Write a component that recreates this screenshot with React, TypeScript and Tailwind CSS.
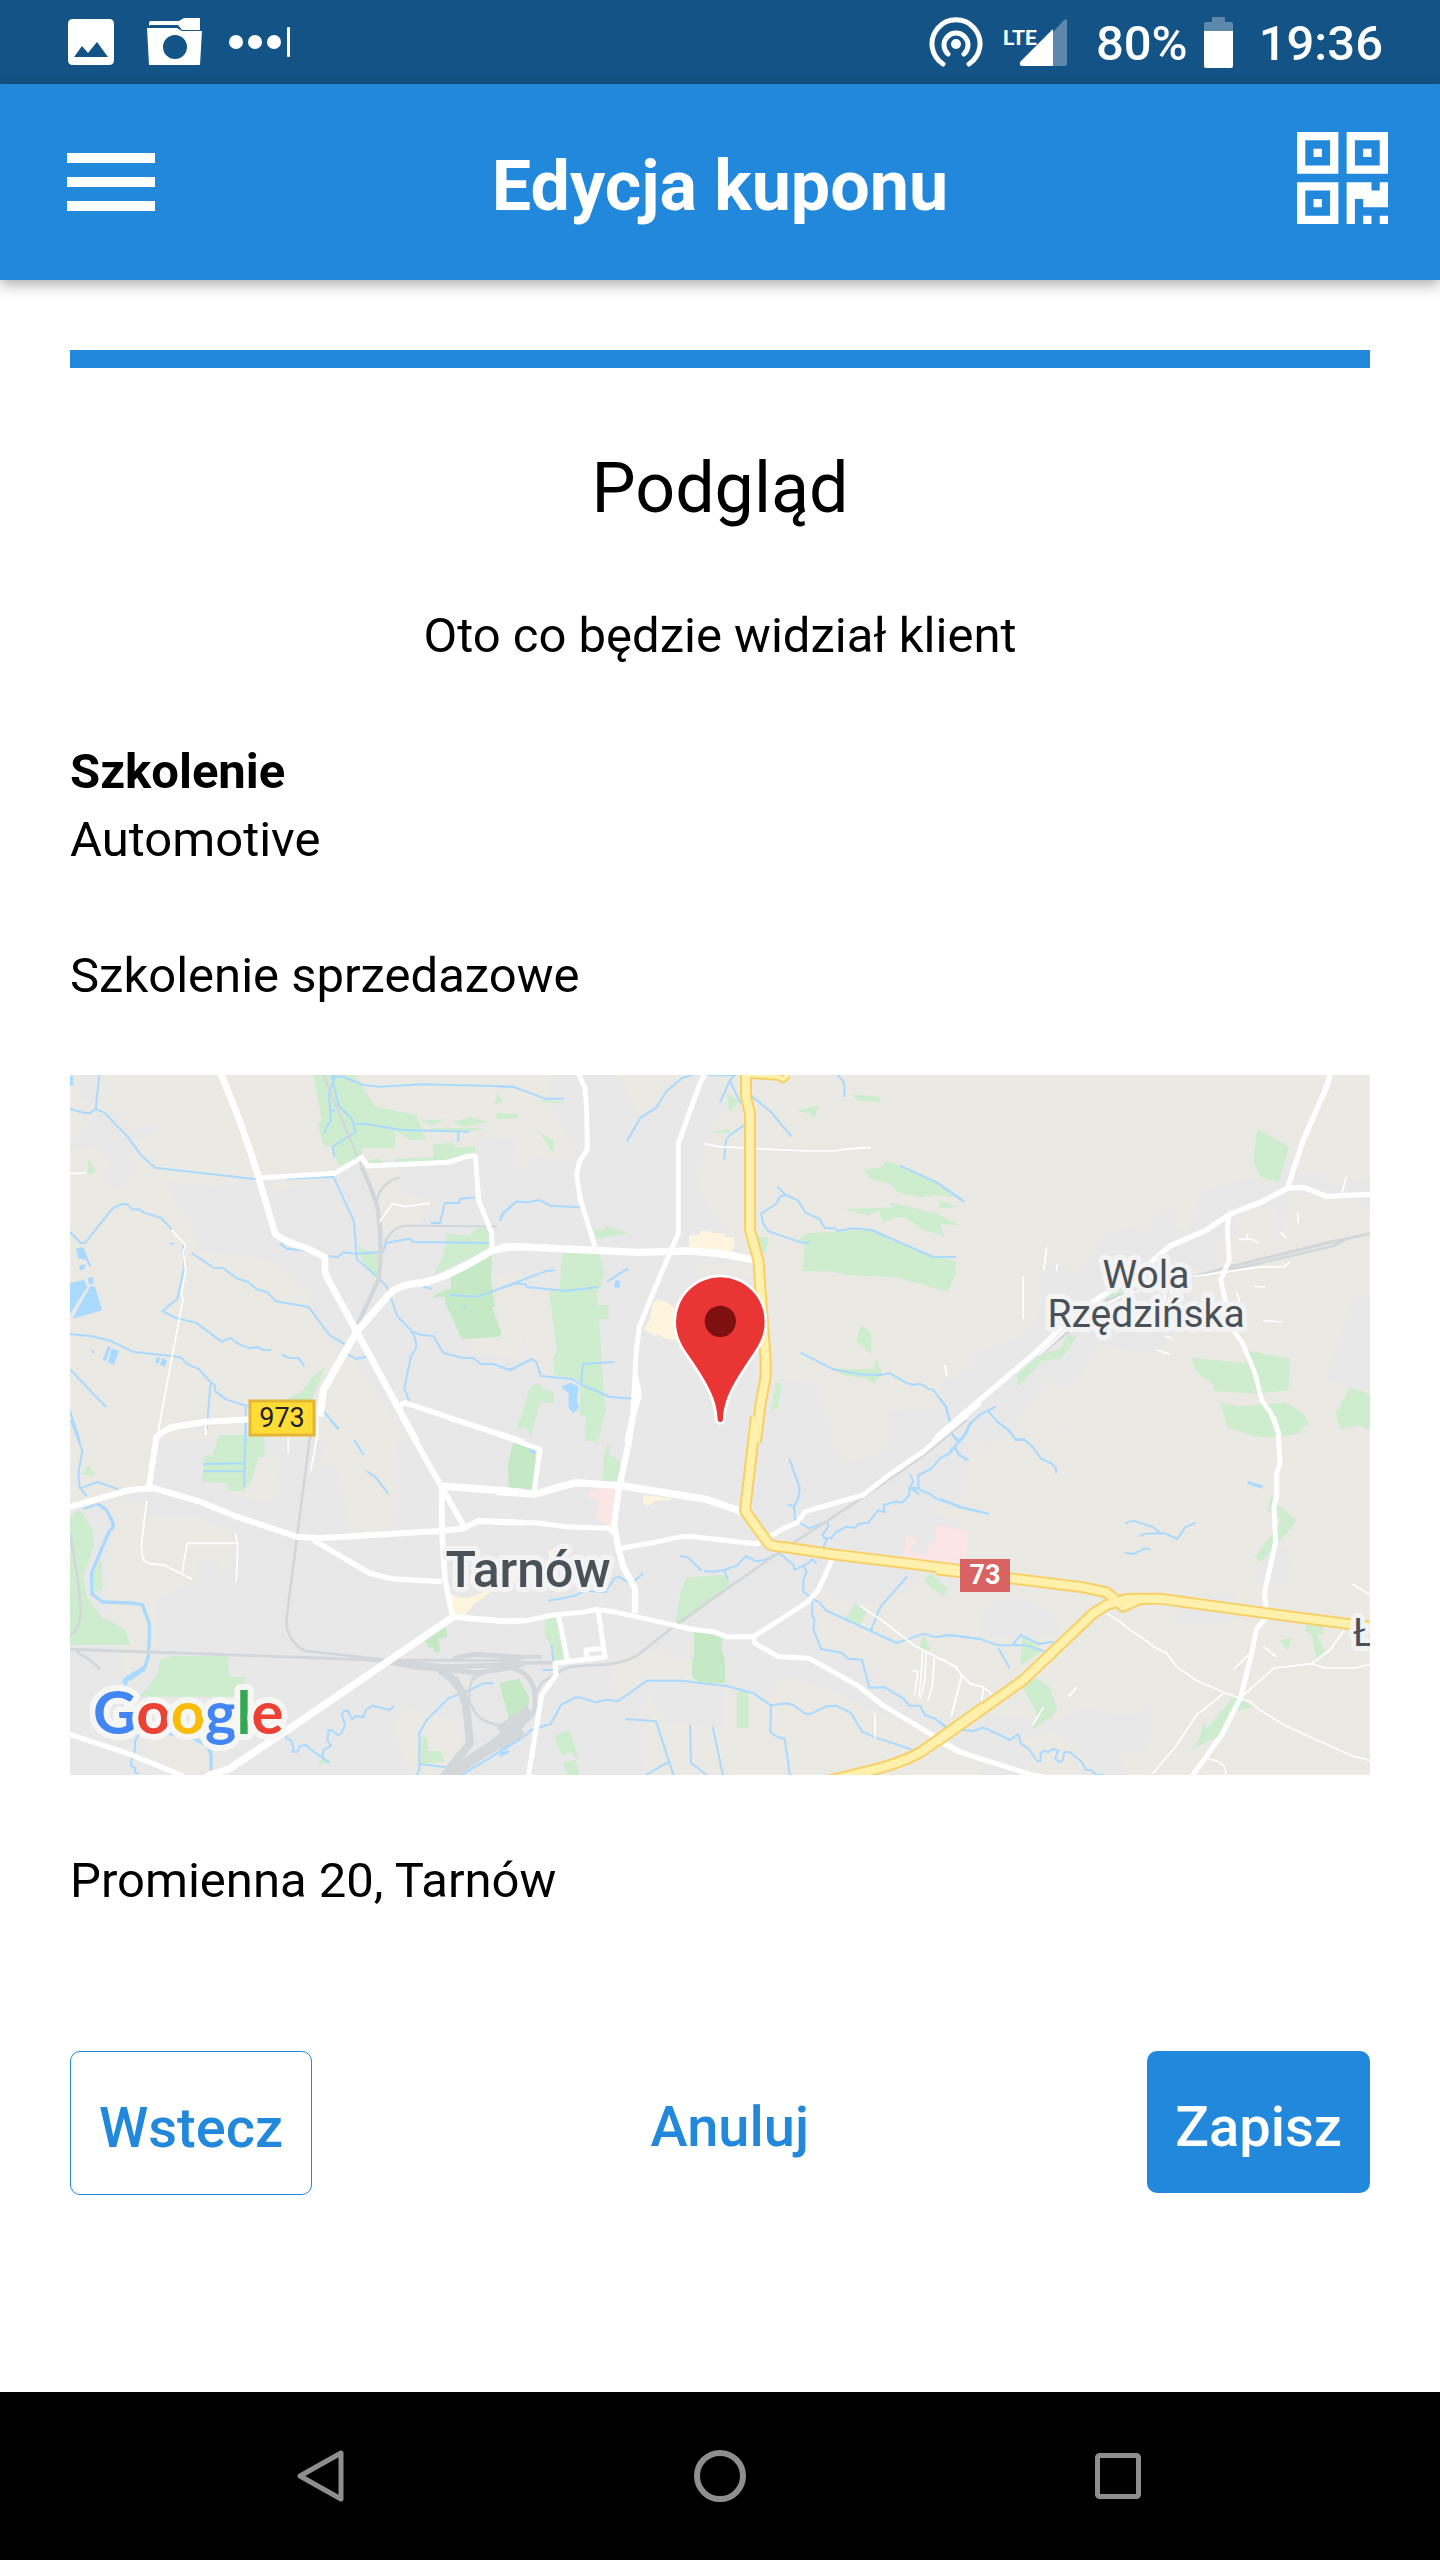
import React from "react";

type Shape = { d: string; w?: number };

type Tile = {
  x: number;
  y: number;
  urban: string[];
  land: string[];
  green: string[];
  darkGreen: string[];
  commercial: string[];
  medical: string[];
  lake: string[];
  stream: Shape[];
  rail: Shape[];
  road: Shape[];
  highway: Shape[];
};

// Map tiles: each one is drawn in units of a third of a pixel from its own origin.
const tiles: Tile[] = [
  {
    x: -30,
    y: -15,
    urban: [
      "M380 362L520 380L650 355L880 345L960 300L1300 290V235H1450V1140H1100L1000 1000L960 1000L940 900L880 850L810 740L800 690L690 600L480 570L440 480L400 410Z",
      "M120 45H178L166 140L120 110Z",
      "M90 270L160 160L250 150L270 210L355 190L345 215L270 250L290 330L250 385H210L190 340L215 310L170 260Z",
    ],
    land: [
      "M690 370L860 350L700 398Z",
      "M970 320L1085 330L1080 400L1180 420L1140 490L1030 520Z",
      "M1360 650L1450 630V900L1380 890L1300 880L1280 830L1385 820Z",
      "M835 1060L930 870L1000 990L1110 1140H820Z",
    ],
    green: [
      "M820 45H942L1008 140L1128 165L1158 240H1110L1065 210V263H967L965 290L897 318L877 258H852L833 195L845 180Z",
      "M1363 135L1375 95L1386 122Z",
      "M1372 158L1433 163V175L1368 178Z",
      "M1140 182L1218 178L1175 195Z",
      "M1235 187L1290 172L1343 185L1275 202Z",
      "M1168 203L1340 205L1290 214L1180 212Z",
      "M1177 254L1240 247L1245 263L1305 259V275L1215 303L1060 308L1070 297L1175 291L1183 288Z",
      "M985 300L1018 295L1035 310H990Z",
      "M145 295L168 335L145 343Z",
      "M953 558L1015 585L1010 650L1000 650L965 600Z",
      "M1219 520L1285 527L1310 503H1345L1360 560L1180 647L1212 583Z",
      "M735 1020L785 995L820 948L857 920L815 1020Z",
      "M540 1125H628V1145H530Z",
    ],
    darkGreen: ["M1233 650L1355 585L1354 672L1366 740H1355L1385 820L1380 830L1266 838L1216 730V712L1182 713V704L1233 684Z"],
    commercial: [],
    medical: [],
    lake: [
      "M90 47H99V75L90 78Z",
      "M108 565L130 562L153 618L148 620L138 600L115 595Z",
      "M117 617L137 612L133 628L120 632Z",
      "M90 670L132 659L142 680L90 763Z",
      "M142 656L158 650L162 668L150 676Z",
      "M150 680L164 677L187 751L97 776Z",
      "M204 858L213 860L198 903L188 899Z",
      "M215 865L237 873L222 914L204 907Z",
      "M350 892L360 895L355 912L346 909Z",
      "M366 895L381 900L375 920L360 914Z",
      "M386 548L406 549L396 556Z",
      "M153 869L166 875L160 882Z",
      "M1265 738H1282L1275 745Z",
    ],
    stream: [
      { d: "M178 45L167 147L150 159H135L90 147M167 147L192 157L262 229L306 289L346 323L650 358M740 356L880 350L942 484L950 597" },
      { d: "M875 48L910 51L970 75L1020 80L1150 73L1418 80L1440 88" },
      { d: "M875 48L883 85L897 138L936 176L946 216L878 260L883 292M867 95L872 185L860 200L852 222M945 191L980 192L1085 210L1288 215M1255 215V245M885 50L867 95M870 148L886 155" },
      { d: "M90 516L122 549H135L218 445L245 432L262 433L278 449L297 448L313 458L364 474L395 508" },
      { d: "M430 555L433 620L412 717L367 753L405 773L468 788L545 845L571 834L598 853L628 865L650 861L670 870H694" },
      { d: "M455 579L523 624H549L588 654L624 666L650 688L682 697L708 724L806 741L868 825L915 853M920 880L947 897L980 890" },
      { d: "M725 883L745 893L777 895L793 919" },
      { d: "M90 822L155 829L210 842L278 875L420 891L445 914L477 927L512 967L524 975V992L558 1018L628 1040" },
      { d: "M90 928L198 1041M90 1054L120 1145M512 967L500 1110M617 1040V1145" },
      { d: "M720 550L740 566L800 572M865 588L893 592L910 577L950 581L1030 575L1037 549L1107 536L1122 546L1350 549" },
      { d: "M950 597L1005 644L1040 680L1072 768L1116 815L1145 825L1180 828L1210 879L1270 894H1300L1323 912H1358L1412 930L1440 915M1116 815Q1132 845 1128 865L1113 889L1093 985L1108 1025" },
      { d: "M1172 489H1200L1214 429H1257L1260 417L1305 412M1382 482L1388 462L1428 425H1440M1230 705L1312 710L1420 672L1440 664" },
      { d: "M850 1052L896 1107M1150 680L1176 686" },
    ],
    rail: [
      { d: "M850 45L965 320", w: 7 },
      { d: "M965 320Q1000 400 1012 440Q1030 560 1015 660L950 800", w: 13 },
      { d: "M950 800L855 990L810 1140", w: 6 },
      { d: "M1012 420Q1020 370 1078 352M1035 545Q1060 500 1095 497L1370 499", w: 7 },
    ],
    road: [
      { d: "M542 40Q610 200 655 350L705 520Q720 540 800 565L855 592V635L860 650L950 815L1130 1145", w: 20 },
      { d: "M655 354L885 340L965 292L983 318L1225 307L1280 289H1306L1316 420L1355 520V575", w: 15 },
      { d: "M840 1070L850 990L950 815L1050 700Q1080 673 1150 668Q1230 650 1355 572L1400 562L1450 560", w: 22 },
      { d: "M345 1140Q350 1105 500 1085L630 1078M1075 1040L1095 1028L1450 1147", w: 16 },
      { d: "M90 340H138M395 510L437 555L430 575L437 632L424 705L429 717L355 1110M1018 486L1058 431L1095 440L1170 429M497 1085V1125M832 1060V1140", w: 5 },
    ],
    highway: [],
  },
  {
    x: 430,
    y: -15,
    urban: [
      "M0 200L150 150V45H640L690 130L640 190L600 330V400L660 490L700 530L760 640L820 960L960 970L970 1060L1290 1050L1450 1000V1145H0Z",
    ],
    land: [
      "M0 150L150 140L215 250L210 300L90 290V320L50 320V235H0Z",
      "M350 45H560L500 110L420 170Z",
      "M595 620L760 600V650L595 650Z",
      "M0 700L80 680L150 700L165 880L150 940L110 935L60 800L0 740Z",
    ],
    green: [
      "M120 217L162 243L158 282Z",
      "M280 508L315 510V495L384 520L290 537Z",
      "M0 162L52 164V173L0 177Z",
      "M680 97L718 125L688 160Z",
      "M628 216L688 207V219Z",
      "M890 154L956 135L944 175L928 160Z",
      "M1057 103L1140 110V127L1075 123Z",
      "M187 580H297L315 640L305 660V675L290 695L294 735H325V778H297L312 1000L318 1050L295 1140H255L258 1070L238 1065L242 965L215 955L163 945L160 885L172 880L148 695L178 690Z",
      "M52 1110L85 1000L90 980L118 968L125 985L162 997L160 1030L120 1025L92 1132L80 1102Z",
      "M770 530L805 534L797 580L780 570Z",
      "M898 540L920 520L1110 510L1300 592L1366 603V640L1342 695L1190 652L1050 646L990 635L906 632L916 562Z",
      "M1089 328L1142 323L1162 301L1200 318L1310 370L1365 410L1300 405L1265 412L1198 400L1165 370L1115 358Z",
      "M1030 448L1180 442L1170 427L1315 462L1383 497L1317 491L1333 527L1273 512L1218 473L1182 470L1150 490L1135 450L1105 466Z",
      "M1315 443L1325 423L1372 441Z",
      "M1084 794L1115 820L1112 882L1068 843Z",
      "M990 925L1120 928L1130 898L1146 940L1122 970L1095 955L1040 948Z",
      "M828 968H846L833 1045L813 1050Z",
      "M125 120L190 125V130L125 125Z",
    ],
    darkGreen: [],
    commercial: [
      "M567 528L600 522V512H625L640 520H675V532H702L704 560L695 577L640 585L567 565Z",
      "M458 730L470 720L500 725L522 745L530 843L490 835L480 822L466 828L432 808L450 780Z",
    ],
    medical: [],
    lake: ["M183 980L212 968L236 980L230 1020L237 1043L220 1060L206 1043V1000Z", "M346 660L362 664L357 684L342 682Z"],
    stream: [
      { d: "M0 80H40L135 116H192M580 45L546 54L498 95L470 142L422 172L381 244" },
      { d: "M625 46H705L690 60L660 128M688 60L722 130M755 108L810 153L874 229M732 196L690 225L678 240L673 298" },
      { d: "M1010 45Q1033 60 1033 75V112" },
      { d: "M0 482L8 460L48 425L85 427L118 420L150 437L240 442" },
      { d: "M0 686L135 634L164 631M40 670L77 673L80 681L198 693L294 681M322 664L385 625" },
      { d: "M0 922L32 930L95 897L110 908L122 948L215 957L240 972L330 1011L400 1016M341 906L249 912L243 972" },
      { d: "M832 380L858 405L895 422L917 458L958 477L976 505H1004L1012 513L1062 505L1115 510L1300 591H1368M855 405L840 410L828 432L784 460L790 492L806 514L905 548H928" },
      { d: "M1200 317L1310 367L1392 425M902 878L1000 928L1080 943L1140 945L1170 940L1218 968L1240 975L1260 971L1285 986L1300 990L1338 1041L1352 1100" },
    ],
    rail: [],
    road: [
      { d: "M235 40L255 85L260 150L262 268L238 305L230 345L240 415L285 560", w: 15 },
      { d: "M615 40L600 70L535 250V520L505 590L450 720L418 800L408 880L405 950L398 1070L380 1145M408 950L418 1005L400 1070", w: 15 },
      { d: "M0 562L50 560L415 577L560 573Q660 576 760 600", w: 22 },
      { d: "M0 1125L70 1147M1300 1145L1440 1028", w: 16 },
      { d: "M612 250L655 260L920 273H1005L1030 268L1113 262M1335 915L1340 948", w: 5 },
    ],
    highway: [
      { d: "M750 45L835 50L848 58L865 45", w: 12 },
      { d: "M738 40V110L750 160V510L775 600L797 900V950L782 1030L768 1145", w: 24 },
    ],
  },
  {
    x: 870,
    y: -15,
    urban: [
      "M0 970L95 920V880L240 835L295 770L300 640L350 600L415 640L490 525L580 500L610 530L630 480L705 430V500L740 520L785 395L920 355L1000 370L1050 280L1060 345L1155 340V375L1300 355V450L1210 410L1050 400L1030 500L1000 570L1010 440L950 440L880 480L910 520L830 550L820 620L650 640L750 660L760 730L910 720L900 810L720 800L640 885L480 850L430 940L360 1000L380 1110L250 1060L210 1140H0Z",
      "M1245 700L1300 720V1000L1155 955Z",
    ],
    land: ["M250 1060L330 960L400 1000L360 1100Z"],
    green: [
      "M952 205L1047 262L1017 367L960 350L940 303Z",
      "M0 592L47 604V640L23 695L0 686Z",
      "M0 385L45 410L0 405ZM0 423L50 440L0 444ZM0 468L62 496L0 491ZM0 495L12 530L0 518Z",
      "M300 882L365 865L383 820L410 830L365 895L305 903L236 980L231 945Z",
      "M755 893L915 910L925 872L1050 897L1046 990L950 1002L822 993L820 972L766 934Z",
      "M842 1028L895 1040L1035 1027L1093 1063L1104 1090L1075 1118L1020 1130L960 1132L863 1103Z",
      "M1230 983L1295 1003V1100L1280 1107L1257 1094L1200 1108L1187 1060Z",
      "M497 712L545 682L585 680L590 690L500 722Z",
    ],
    darkGreen: [],
    commercial: [],
    medical: [],
    lake: [],
    stream: [{ d: "M0 374L73 425M0 591H48M0 1015L18 1040L32 1090V1120L60 1145L78 1122L90 1092L122 1062L167 1040M143 1052L174 1087L206 1110L228 1138H255" }],
    rail: [
      { d: "M300 885L500 720L600 688L760 650L860 622L1290 520", w: 8 },
      { d: "M865 622L1160 548L1225 535L1180 558L870 630Z", w: 8 },
    ],
    road: [
      { d: "M1172 40L1160 80L1090 240L1042 385L962 427L870 462L800 510L690 558L600 635L420 750L290 875L-10 1130M1042 384L1090 382L1158 409L1295 403", w: 16 },
      { d: "M868 462L862 505L868 600L842 660L858 730L880 810L908 850L945 940L965 1020L993 1060L1015 1115V1145", w: 14 },
      { d: "M320 560L312 630M352 612L350 632M249 650V777M297 886L400 790L540 710L690 660L840 638L970 620L1033 621L1050 604M895 538H938L956 550M922 523V538M1020 517L1040 533M1073 458L1075 490M942 679L977 681M970 782L1028 786M890 697L912 770M650 870L690 883M673 828L692 833M1205 403L1219 350M750 660V697M15 915L20 947M670 680L676 720M690 680L697 712", w: 5 },
    ],
    highway: [],
  },
  {
    x: -30,
    y: 345,
    urban: ["M90 60H1450V1080H90Z"],
    land: [
      "M90 60H345L330 200L90 250Z",
      "M170 250L310 245L330 290L480 290L560 330L590 370L540 480V420H475V480L350 540V690H330V740L250 830V690L200 500L220 310Z",
      "M490 190L600 210L650 110L720 110L700 245L640 240L560 210Z",
      "M860 60H1070L1060 330L930 330L900 170L870 130L830 160Z",
      "M380 920L520 950L540 1060H430L340 1010L300 940Z",
      "M1090 860L1250 900L1270 980L1190 1062H1100L1060 910Z",
    ],
    green: [
      "M128 164L145 133L167 167Z",
      "M538 45H672L674 110L655 112L635 180L611 214H563L561 190L486 186L492 108L518 105Z",
      "M90 290L118 270L158 327L162 380L130 465L140 530L185 590L256 630L270 675H90Z",
      "M184 415L187 508L163 517L155 470Z",
      "M362 718L400 708H564L566 770L618 770L605 830L600 830H300L352 765Z",
      "M1142 948L1163 952V993L1203 994L1213 1025L1143 1033Z",
      "M832 1032L850 1010L873 1030Z",
    ],
    darkGreen: [
      "M1150 655L1217 615L1222 650L1197 657L1200 697L1181 696V682L1167 684Z",
      "M1378 790L1440 775V905L1410 907Z",
      "M1404 130L1420 70H1450V208L1406 207Z",
    ],
    commercial: ["M1232 522L1250 530L1285 535L1340 512L1440 450V480L1355 515L1300 555L1275 585L1240 580Z"],
    medical: [],
    lake: ["M250 775L315 735L318 750L275 780L245 790Z"],
    stream: [
      { d: "M92 0L127 92L115 160L119 202L140 228M119 205L173 186L235 208M870 0L896 27M942 60L972 105M978 153L1005 170L1046 222" },
      { d: "M170 250L200 270L219 308V322L207 335L154 460L156 522L187 546L270 549L307 554L328 610V650L325 710L315 740L260 775L245 840L260 900L300 930L400 942L460 955L500 975L513 1000V1050", w: 10 },
      { d: "M166 255L130 267M490 132L612 130M490 154H612M617 0L612 200M297 940L285 965V988L276 1015L272 1038L285 1042V1056L296 1063" },
      { d: "M738 938V953L756 964V973L761 982L758 995H772L780 978L798 975L818 993L868 1027M848 1010L850 990L873 977L862 960L866 930H875L894 945L905 938L915 915L905 883L912 873L924 872L935 898L948 888L970 892L978 870L998 857L1048 870L1063 857" },
      { d: "M1138 940L1160 900L1225 835L1290 810L1330 790H1360M1138 933V1050L1128 1068M1138 1032L1218 1042M1262 1067L1440 958" },
    ],
    rail: [
      { d: "M90 688L650 707L1000 720L1440 722", w: 9 },
      { d: "M90 340Q120 500 122 580Q120 620 90 650M110 695L150 720L180 747", w: 8 },
      { d: "M810 50L740 590V625Q760 680 797 693L1000 715", w: 8 },
      { d: "M1000 718L1120 740L1310 758L1440 740M1060 722L1210 740L1450 733M1240 716L1300 703L1450 712", w: 15 },
      { d: "M1200 750Q1270 790 1280 870L1290 970L1210 1070", w: 24 },
      { d: "M1210 1070L1340 985L1450 905M1230 1070L1330 1000L1450 935", w: 26 },
      { d: "M1250 770Q1290 850 1310 885Q1350 920 1400 915M1310 755Q1280 800 1290 840M1300 780Q1350 735 1420 745", w: 7 },
    ],
    road: [
      { d: "M85 262L270 210L340 204L480 245L590 290L770 350L835 355L1210 332L1270 325L1315 303L1450 308", w: 18 },
      { d: "M325 215L350 50L390 22L500 5L630 -2", w: 18 },
      { d: "M820 360L990 460L1060 477L1205 485", w: 16 },
      { d: "M1085 -10L1210 210L1272 320M1205 195L1206 340L1215 480L1238 590L1290 595L1400 604L1450 602", w: 17 },
      { d: "M1205 198L1450 217M1240 590L750 925L570 1045L500 1070", w: 22 },
      { d: "M85 942L270 1003L430 1068M1225 -7L1450 65", w: 16 },
      { d: "M320 243L304 375L308 417L325 430L374 436L455 477M425 463L442 370H593M586 340L593 370L589 485M745 50V99M833 0V40L812 153M360 0L355 40M497 0V46", w: 5 },
    ],
    highway: [],
  },
  {
    x: 430,
    y: 345,
    urban: ["M0 15H1430L1380 300L1400 440L1440 560V1070H0Z"],
    land: [
      "M330 740L480 680L500 710L580 715V790L440 782L350 840Z",
      "M440 782L480 905L670 920V790L720 800L760 820L800 850L850 770L1000 810L1090 860L1330 960L1380 1000L1440 1020V1070H430Z",
      "M940 500L1060 560L1210 520L1280 460L1440 530V880L1340 930L1200 820L1080 720L960 680Z",
      "M980 -80H1170L1160 95L1040 130L1000 90Z",
      "M1280 275L1440 200V320Z",
      "M1410 60H1450V300L1390 260Z",
    ],
    green: [
      "M52 0H100L92 55L80 22L55 28ZM258 0H310L292 65L253 63Z",
      "M322 72L333 74L326 105L360 120L362 180L340 190L307 184L312 108Z",
      "M558 473L672 464L695 497L548 610H525L542 515Z",
      "M135 595L170 590L195 715L163 725V690L133 645Z",
      "M710 812L745 816V926L710 923Z",
      "M162 945L208 930L236 1017L213 998L185 1005Z",
      "M190 1030L225 1020L240 1067H202Z",
      "M1066 550L1100 572L1080 617L1035 595Z",
      "M1274 477L1293 460L1340 505L1332 528L1292 503Z",
      "M1256 687L1272 645L1293 690Z",
    ],
    darkGreen: [
      "M582 635L645 645L667 655L665 692L675 715V790L600 788L576 770V720L582 710Z",
      "M40 68L108 90L97 210L37 205L25 130Z",
      "M0 788L57 777L87 830V850L67 895L33 907Z",
    ],
    commercial: ["M145 395L175 378V410L150 430Z", "M430 225L480 230L513 235V240L465 242L445 258L429 250Z", "M0 470L50 450V470L0 490Z"],
    medical: [
      "M290 203L345 208L330 320L290 298L298 240L268 235L266 215L287 213Z",
      "M1218 348L1247 355L1244 372L1233 377V398L1282 402L1287 372L1306 362L1308 318L1360 325L1404 333L1397 413L1365 417V438L1208 418Z",
    ],
    lake: ["M88 85L105 88V102L87 98Z", "M0 998L27 990V998L0 1010Z"],
    stream: [
      { d: "M0 992L75 947L93 930L152 912L183 855L225 833L240 832L290 847L318 839L355 843L441 782H545L605 790L678 797L760 820L813 856L862 850L880 855L912 879L928 883L980 859L1008 857L1053 879L1087 935L1125 952L1240 990" },
      { d: "M377 897L468 904L521 1067M437 1065L508 1025M570 915L573 1028L620 1065M638 920L669 1067M813 856L811 935L830 950L854 956L870 1067" },
      { d: "M145 542L225 527L255 512L317 516L343 475L355 470L393 491L430 460M393 491L408 498M540 408L563 412L605 452M612 453L637 455L672 450L710 437L738 408L768 424L795 420L835 400L848 407L880 435L884 449L910 437L922 432L937 417L950 430M672 450L684 479M910 437L920 455L910 480V515L943 540" },
      { d: "M868 116L899 203L895 235L882 260L862 253M882 260L886 300L928 325L980 305L986 318L967 345L980 360L968 385M970 355H993L1010 335L1040 320L1065 323L1075 312L1105 308L1135 270L1155 277L1150 255L1185 245L1207 248L1228 225V205L1240 185L1230 163M1230 203L1255 222L1238 203H1255V165L1293 147L1320 115L1353 97L1362 83L1376 65L1352 37L1350 0M1376 65L1392 45L1410 10M1366 85L1380 107L1404 121M1250 205L1290 222L1308 235L1380 262L1440 275" },
      { d: "M938 545L936 585L943 600L941 630L963 687L1025 698L1043 716L1086 719L1108 803L1155 802L1210 836L1228 857H1260L1275 885L1305 896L1340 922M943 540L960 548L976 570L1190 669L1272 641L1305 652L1350 645L1440 657M1222 469L1142 560L1112 632" },
      { d: "M155 675L160 725M127 750L160 750" },
    ],
    rail: [
      { d: "M1400 0L1265 110L1100 225L840 395L640 535L520 620L410 708Q370 728 320 733L210 740Q160 760 125 790L100 830", w: 8 },
      { d: "M0 710H125M0 728H170", w: 12 },
      { d: "M0 740Q90 740 105 820V860Q100 900 0 960", w: 14 },
      { d: "M0 935L90 870", w: 34 },
    ],
    road: [
      { d: "M-10 215L105 222L225 188L365 197L620 238L725 275", w: 22 },
      { d: "M398 -10L384 80L358 200L342 310L355 385L370 440L405 505V580", w: 19 },
      { d: "M-10 307L105 308L200 320L325 325L342 340M350 387L450 370L545 350L580 350L770 372L800 355L855 323L892 308L915 275L1090 225L1160 170L1270 95L1400 -15", w: 15 },
      { d: "M-10 604L80 602L160 585L245 577L290 568L340 575L475 605L570 627L640 635L680 650H760L920 548L955 510L1000 410M175 585L202 720M295 575L315 712L165 730L168 765L125 825L85 1070M315 685L258 690L262 715", w: 15 },
      { d: "M760 650L765 670L835 710L928 715L1078 800L1150 857L1305 950L1375 993L1450 1020M-10 40L120 88L102 215", w: 15 },
      { d: "M1080 558L1140 597L1245 678L1365 740L1386 766L1412 792L1440 799M1386 766L1354 888M1268 692L1263 770L1257 830M1278 695L1275 775L1262 835M1303 710L1297 800L1284 840M1237 752L1254 755L1243 828M1125 878V955", w: 5 },
    ],
    highway: [
      { d: "M768 -10L735 272L805 370Q815 380 860 382L1000 403L1440 457", w: 24 },
      { d: "M970 1086L1110 1052Q1200 1030 1260 998L1450 862", w: 24 },
    ],
  },
  {
    x: 870,
    y: 345,
    urban: [
      "M0 0H180L140 120L100 130L90 210L60 240L0 230Z",
      "M90 620L160 540L240 530L350 590L360 650H90Z",
      "M690 590L790 525L890 520L870 560L910 590L850 610H700Z",
      "M950 460L1000 370L1060 390L1040 500L940 490Z",
      "M0 870L200 890L340 900L440 865L520 885H600L625 850L640 920L620 1000L530 990L560 1065H0Z",
    ],
    land: ["M250 960L340 930L420 1000L480 1068H260Z"],
    green: [
      "M857 0H1104L1070 42L990 52L865 22Z",
      "M1192 0H1295V15L1282 26L1258 15L1200 27Z",
      "M995 222L1002 255L1023 262L1070 303L1010 375L965 427L943 412L998 340L1023 300L1000 280L981 272Z",
      "M247 650L310 690L240 737Z",
      "M255 790L290 775L330 803L352 870L335 890L278 928L290 880L247 800Z",
      "M0 487L20 507L13 528L0 520Z",
      "M1016 660L1056 655L1043 690Z",
      "M1100 615H1155L1145 645H1128L1155 693L1130 715L1114 643L1095 635Z",
      "M885 825L938 860L890 873L850 945L800 965L750 995L778 958L790 908L800 925Z",
    ],
    darkGreen: [],
    commercial: [],
    medical: ["M0 318L40 325L84 333L78 413L45 417V435H0Z"],
    lake: ["M924 183L967 196V206L922 192Z"],
    stream: [
      { d: "M167 0L206 32L228 60H255L280 83L303 116L335 130L348 145V160M0 237L70 263L147 281" },
      { d: "M555 310L580 302L640 322L660 338M598 349L615 341L675 340L712 357L735 322L768 307M555 398L580 402L615 385L631 389" },
      { d: "M0 649L30 645L120 657L175 676H258L315 695M216 676L242 645L297 672L340 665M175 684L209 745" },
      { d: "M0 908L20 925L70 930L102 933L130 922L170 940L210 960L235 942L242 970L265 985L292 1023H302V1000L312 993L325 996L338 987L355 993L345 1015L358 1027L368 1022L373 997H390L425 1025L438 1050H452L470 1065H493" },
      { d: "M30 0L32 10M103 0L90 10L78 40L55 67L45 83L35 85L30 98L0 116M45 83L55 103L85 121M32 37L55 67" },
    ],
    rail: [],
    road: [
      { d: "M1000 -10L1015 40L1020 130L1010 160V230L1002 260L1007 365L973 520L982 590L950 625L935 700L903 830L845 945L755 1070M-10 958L50 993L270 1063L330 1075M-10 60L75 -10", w: 15 },
      { d: "M500 580L540 605L567 628L620 663L640 680L680 700L710 740L767 780L850 817L930 845L955 867L1030 914L1235 1007L1295 1023M850 820L770 885L705 982L637 1062M900 835L1002 744L1115 731L1155 744H1245L1295 732M1115 731L1170 690L1213 630M932 698L881 748M970 679L1010 711M1238 493L1295 527M805 1017Q850 1025 855 1045L859 1065M410 802L386 829M310 862L278 915M0 715L48 740L65 766L92 792L130 801L155 823M65 766L34 888M130 801L126 840", w: 5 },
    ],
    highway: [
      { d: "M-10 448L430 502L500 517L550 560L600 537L660 536L980 580L1295 621", w: 24 },
      { d: "M-10 965L250 780L460 580L500 555L560 537L610 536", w: 24 },
    ],
  },
];

type FillKey = "urban" | "land" | "green" | "darkGreen" | "commercial" | "medical" | "lake";
const fills: { key: FillKey; color: string }[] = [
  { key: "urban", color: "#e8e8e8" },
  { key: "land", color: "#eae9e3" },
  { key: "green", color: "#ceedce" },
  { key: "darkGreen", color: "#c5e8c5" },
  { key: "commercial", color: "#fdf5dd" },
  { key: "medical", color: "#fbe6e5" },
  { key: "lake", color: "#aadaff" },
];

type LineKey = "stream" | "rail" | "road" | "highway";
const lines: { key: LineKey; color: string; width: number; extra: number }[] = [
  { key: "stream", color: "#aadaff", width: 6, extra: 0 },
  { key: "rail", color: "#d4d7da", width: 8, extra: 0 },
  { key: "road", color: "#ffffff", width: 14, extra: 0 },
  { key: "highway", color: "#f8d066", width: 24, extra: 12 },
  { key: "highway", color: "#fff0ab", width: 24, extra: 0 },
];

function TownMap() {
  return (
    <svg
      viewBox="0 0 1300 700"
      role="img"
      aria-label="Mapa: Promienna 20, Tarnów"
      className="block h-auto w-full bg-[#eae9e3]"
    >
      {fills.map(({ key, color }) => (
        <g key={key} fill={color}>
          {tiles.map((t) => (
            <g key={t.x + "," + t.y} transform={`translate(${t.x} ${t.y}) scale(${1 / 3})`}>
              {t[key].map((d) => (
                <path key={d} d={d} />
              ))}
            </g>
          ))}
        </g>
      ))}
      {lines.map(({ key, color, width, extra }) => (
        <g key={key + color} fill="none" stroke={color} strokeLinejoin="round">
          {tiles.map((t) => (
            <g key={t.x + "," + t.y} transform={`translate(${t.x} ${t.y}) scale(${1 / 3})`}>
              {t[key].map((s) => (
                <path key={s.d} d={s.d} strokeWidth={(s.w ?? width) + extra} />
              ))}
            </g>
          ))}
        </g>
      ))}

      <rect x="180" y="326" width="64" height="34" fill="#ffdc36" stroke="#e3b637" strokeWidth="3" />
      <rect x="890" y="484" width="50" height="33" fill="#d96262" />

      <g fontFamily="Roboto, sans-serif" textAnchor="middle">
        <text x="212" y="352" fontSize="27" fill="#202124">973</text>
        <text x="915" y="509" fontSize="27" fontWeight="700" fill="#ffffff">73</text>
        <g fill="#4a5259" stroke="#f3f3f3" strokeWidth="10" strokeLinejoin="round" paintOrder="stroke">
          <text x="1076" y="213" fontSize="39">Wola</text>
          <text x="1076" y="252" fontSize="39">Rzędzińska</text>
          <text x="458" y="512" fontSize="50" fontWeight="500">Tarnów</text>
          <text x="1283" y="571" fontSize="39" textAnchor="start">Ł</text>
        </g>
      </g>

      <g transform="translate(430 -15) scale(0.3333)">
        <path
          d="M661 652A133 133 0 0 1 794 785C794 830 775 860 750 895C700 970 672 1015 669 1078A8 8 0 0 1 653 1078C650 1015 622 970 572 895C547 860 528 830 528 785A133 133 0 0 1 661 652Z"
          fill="#ea3535"
          stroke="#ffffff"
          strokeWidth="16"
          paintOrder="stroke"
        />
        <circle cx="661" cy="784" r="47" fill="#7f1010" />
      </g>

      <text
        x="23"
        y="659"
        fontFamily="Lato, sans-serif"
        fontSize="60"
        fontWeight="700"
        stroke="#f6f6f4"
        strokeWidth="12"
        strokeLinejoin="round"
        paintOrder="stroke"
      >
        <tspan fill="#4285f4">G</tspan>
        <tspan fill="#ea4335">o</tspan>
        <tspan fill="#fbbc05">o</tspan>
        <tspan fill="#4285f4">g</tspan>
        <tspan fill="#34a853">l</tspan>
        <tspan fill="#ea4335">e</tspan>
      </text>
    </svg>
  );
}

function StatusBar() {
  return (
    <div className="flex h-[84px] items-center justify-between bg-[#145385] pr-[57px] pl-[68px] text-white">
      <div className="flex items-center">
        <svg width="46" height="46" viewBox="0 0 46 46" fill="#fff" aria-hidden="true">
          <path fillRule="evenodd" d="M5 0H41Q46 0 46 5V41Q46 46 41 46H5Q0 46 0 41V5Q0 0 5 0ZM6 38H40L29 23L20 34L14 27Z" />
        </svg>
        <svg className="ml-8" width="57" height="48" viewBox="0 0 57 48" fill="#fff" aria-hidden="true">
          <path d="M3 8V5Q3 3 5 3H33L38 0H54V12H36L32 7H4Z" />
          <path fillRule="evenodd" d="M1 10H31L36 13H56L54 47H3ZM29 17A12 12 0 1 0 29 41A12 12 0 1 0 29 17Z" />
        </svg>
        <svg className="ml-[26px]" width="61" height="30" viewBox="0 0 61 30" fill="#fff" aria-hidden="true">
          <circle cx="7" cy="15" r="7" />
          <circle cx="26" cy="15" r="7" />
          <circle cx="45" cy="15" r="7" />
          <rect x="58" y="0" width="3" height="30" rx="1" />
        </svg>
      </div>
      <div className="flex items-center font-medium">
        <svg width="54" height="50" viewBox="0 0 54 50" fill="none" stroke="#fff" strokeWidth="5" strokeLinecap="round" aria-hidden="true">
          <path d="M14 47A24 24 0 1 1 40 47M19 37A12 12 0 1 1 35 37" />
          <circle cx="27" cy="27" r="5" fill="#fff" stroke="none" />
        </svg>
        <span className="ml-5 w-[32px] self-start pt-[16px] text-[21px] leading-[24px] font-bold">LTE</span>
        <svg className="-ml-4" width="48" height="48" viewBox="0 0 48 48" aria-hidden="true">
          <path d="M34 14L45 2Q48 0 48 3V46Q48 48 46 48H34Z" fill="#5d88ab" />
          <path d="M34 11V48H3Q-1 47 2 43Z" fill="#fff" />
        </svg>
        <span className="ml-[29px] pt-1 text-[49px] leading-[60px]">80%</span>
        <svg className="ml-4" width="29" height="51" viewBox="0 0 29 51" aria-hidden="true">
          <path d="M8 0H21V5H27Q29 5 29 7V15H0V7Q0 5 2 5H8Z" fill="#5d88ab" />
          <path d="M0 14H29V49Q29 51 27 51H2Q0 51 0 49Z" fill="#fff" />
        </svg>
        <span className="ml-[26px] pt-1 text-[49px] leading-[60px]">19:36</span>
      </div>
    </div>
  );
}

function Header() {
  return (
    <header className="relative z-10 flex h-[196px] items-center justify-between bg-[#2188dc] pr-[52px] pl-[67px] text-white shadow-[0_4px_14px_rgba(0,0,0,0.35)]">
      <button type="button" aria-label="Menu" className="flex w-[91px] flex-col gap-[14px] py-4">
        <span className="h-[10px] w-[88px] bg-white" />
        <span className="h-[10px] w-[88px] bg-white" />
        <span className="h-[10px] w-[88px] bg-white" />
      </button>
      <h1 className="pt-2 pr-[15px] text-[70px] leading-[84px] font-bold">Edycja kuponu</h1>
      <button type="button" aria-label="Kod QR" className="mb-2">
        <svg width="91" height="92" viewBox="0 0 11 11" preserveAspectRatio="none" fill="#fff" aria-hidden="true">
          <path
            fillRule="evenodd"
            d="M0 0H5V5H0ZM1 1V4H4V1ZM2 2H3V3H2ZM6 0H11V5H6ZM7 1V4H10V1ZM8 2H9V3H8ZM0 6H5V11H0ZM1 7V10H4V7ZM2 8H3V9H2ZM6 6H9V7H10V6H11V9H8V8H7V11H6ZM8 10H9V11H8ZM10 10H11V11H10Z"
          />
        </svg>
      </button>
    </header>
  );
}

function NavBar() {
  const item = "flex flex-1 items-center justify-center";
  return (
    <nav aria-label="System" className="flex h-[168px] bg-black px-[123px]">
      <button type="button" aria-label="Wstecz" className={item}>
        <svg width="52" height="52" viewBox="0 0 52 52" fill="none" stroke="#8e8e8e" strokeWidth="5" strokeLinejoin="round" aria-hidden="true">
          <path d="M45 3V49L4 26Z" />
        </svg>
      </button>
      <button type="button" aria-label="Ekran główny" className={item}>
        <svg width="52" height="52" viewBox="0 0 52 52" fill="none" stroke="#8e8e8e" strokeWidth="6" aria-hidden="true">
          <circle cx="26" cy="26" r="23" />
        </svg>
      </button>
      <button type="button" aria-label="Ostatnie aplikacje" className={item}>
        <svg width="46" height="46" viewBox="0 0 46 46" fill="none" stroke="#8e8e8e" strokeWidth="5" aria-hidden="true">
          <rect x="2.5" y="2.5" width="41" height="41" rx="2" />
        </svg>
      </button>
    </nav>
  );
}

export default function App() {
  return (
    <div className="flex min-h-screen flex-col bg-white font-[Roboto,sans-serif] text-black">
      <StatusBar />
      <Header />
      <main className="flex-1 px-[70px] pt-[70px] pb-16 text-[49px] leading-[68px]">
        <div className="h-[18px] bg-[#2188dc]" />
        <h2 className="mt-[78px] text-center text-[70px] leading-[84px]">Podgląd</h2>
        <p className="mt-[72px] text-center">Oto co będzie widział klient</p>
        <h3 className="mt-[68px] font-bold">Szkolenie</h3>
        <p>Automotive</p>
        <p className="mt-[68px] mb-[65px]">Szkolenie sprzedazowe</p>
        <TownMap />
        <p className="mt-[72px]">Promienna 20, Tarnów</p>
        <div className="mt-[136px] flex items-start justify-between text-[56px] font-medium text-[#2188dc]">
          <button type="button" className="rounded-[10px] border border-[#2188dc] px-7 pt-[42px] pb-8">
            Wstecz
          </button>
          <button type="button" className="px-7 pt-[42px] pb-8">
            Anuluj
          </button>
          <button type="button" className="rounded-[10px] bg-[#2188dc] px-7 pt-[42px] pb-8 text-white">
            Zapisz
          </button>
        </div>
      </main>
      <NavBar />
    </div>
  );
}
